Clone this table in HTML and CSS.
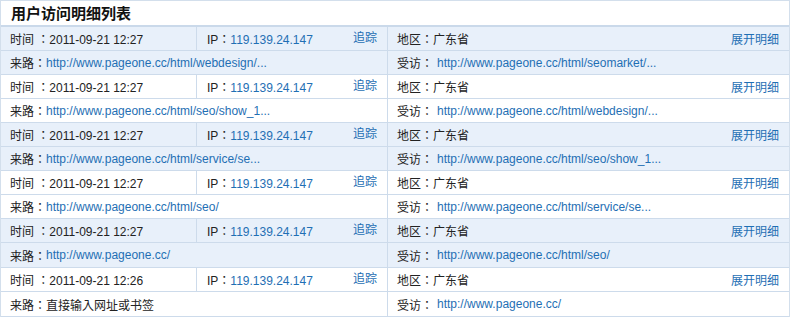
FILE: index.html
```html
<!DOCTYPE html>
<html>
<head>
<meta charset="utf-8">
<link rel="stylesheet" href="styles.css">
</head>
<body>
<div class="panel">
  <div class="title">用户访问明细列表</div>
  <div class="list">
    <div class="rec alt">
      <div class="c t">时间 ：2011-09-21 12:27</div>
      <div class="c ip"><span>IP：<a>119.139.24.147</a></span><a class="act">追踪</a></div>
      <div class="c reg"><span>地区：广东省</span><a class="act">展开明细</a></div>
      <div class="c src">来路：<a>http://www.pageone.cc/html/webdesign/...</a></div>
      <div class="c vis">受访：<a class="sp">http://www.pageone.cc/html/seomarket/...</a></div>
    </div>
    <div class="rec">
      <div class="c t">时间 ：2011-09-21 12:27</div>
      <div class="c ip"><span>IP：<a>119.139.24.147</a></span><a class="act">追踪</a></div>
      <div class="c reg"><span>地区：广东省</span><a class="act">展开明细</a></div>
      <div class="c src">来路：<a>http://www.pageone.cc/html/seo/show_1...</a></div>
      <div class="c vis">受访：<a class="sp">http://www.pageone.cc/html/webdesign/...</a></div>
    </div>
    <div class="rec alt">
      <div class="c t">时间 ：2011-09-21 12:27</div>
      <div class="c ip"><span>IP：<a>119.139.24.147</a></span><a class="act">追踪</a></div>
      <div class="c reg"><span>地区：广东省</span><a class="act">展开明细</a></div>
      <div class="c src">来路：<a>http://www.pageone.cc/html/service/se...</a></div>
      <div class="c vis">受访：<a class="sp">http://www.pageone.cc/html/seo/show_1...</a></div>
    </div>
    <div class="rec">
      <div class="c t">时间 ：2011-09-21 12:27</div>
      <div class="c ip"><span>IP：<a>119.139.24.147</a></span><a class="act">追踪</a></div>
      <div class="c reg"><span>地区：广东省</span><a class="act">展开明细</a></div>
      <div class="c src">来路：<a>http://www.pageone.cc/html/seo/</a></div>
      <div class="c vis">受访：<a class="sp">http://www.pageone.cc/html/service/se...</a></div>
    </div>
    <div class="rec alt">
      <div class="c t">时间 ：2011-09-21 12:27</div>
      <div class="c ip"><span>IP：<a>119.139.24.147</a></span><a class="act">追踪</a></div>
      <div class="c reg"><span>地区：广东省</span><a class="act">展开明细</a></div>
      <div class="c src">来路：<a>http://www.pageone.cc/</a></div>
      <div class="c vis">受访：<a class="sp">http://www.pageone.cc/html/seo/</a></div>
    </div>
    <div class="rec">
      <div class="c t">时间 ：2011-09-21 12:26</div>
      <div class="c ip"><span>IP：<a>119.139.24.147</a></span><a class="act">追踪</a></div>
      <div class="c reg"><span>地区：广东省</span><a class="act">展开明细</a></div>
      <div class="c src">来路：直接输入网址或书签</div>
      <div class="c vis">受访：<a class="sp">http://www.pageone.cc/</a></div>
    </div>
  </div>
</div>
</body>
</html>
```
FILE: styles.css
```css
html, body {
  margin: 0;
  padding: 0;
  background: #ffffff;
}
body {
  font-family: "Liberation Sans", Arial, "Noto Sans CJK TC", sans-serif;
  font-size: 12px;
  color: #222;
}
.panel {
  width: 788px;
  border: 1px solid #d3dfec;
  border-bottom: none;
}
.title {
  height: 24px;
  line-height: 24px;
  padding-left: 10px;
  font-size: 15px;
  font-weight: bold;
  color: #111;
  border-bottom: 2px solid #cad9ea;
  font-family: "Noto Sans CJK SC", sans-serif;
}
.rec {
  display: grid;
  grid-template-columns: 196px 191px 1fr;
  grid-template-rows: 24px 24px;
}
.rec:nth-child(n+5) {
  grid-template-rows: 24px 25px;
}
.rec.alt {
  background: #e8f0fa;
}
.c {
  border-bottom: 1px solid #cddbeb;
  padding-left: 9px;
  white-space: nowrap;
  overflow: hidden;
  display: flex;
  align-items: center;
}
.c.t, .c.ip, .c.src {
  border-right: 1px solid #cddbeb;
}
.c.src {
  grid-column: 1 / 3;
}
.c.vis {
  grid-column: 3;
}
.c.ip, .c.reg {
  justify-content: space-between;
  padding-right: 10px;
}
.c.ip {
  padding-left: 10px;
}
a {
  color: #1f6fb4;
  text-decoration: none;
}
.sp {
  margin-left: 4px;
}
.act {
  font-family: "Noto Sans CJK SC", sans-serif;
}
.c.ip .act {
  position: relative;
  top: -2px;
}
```
